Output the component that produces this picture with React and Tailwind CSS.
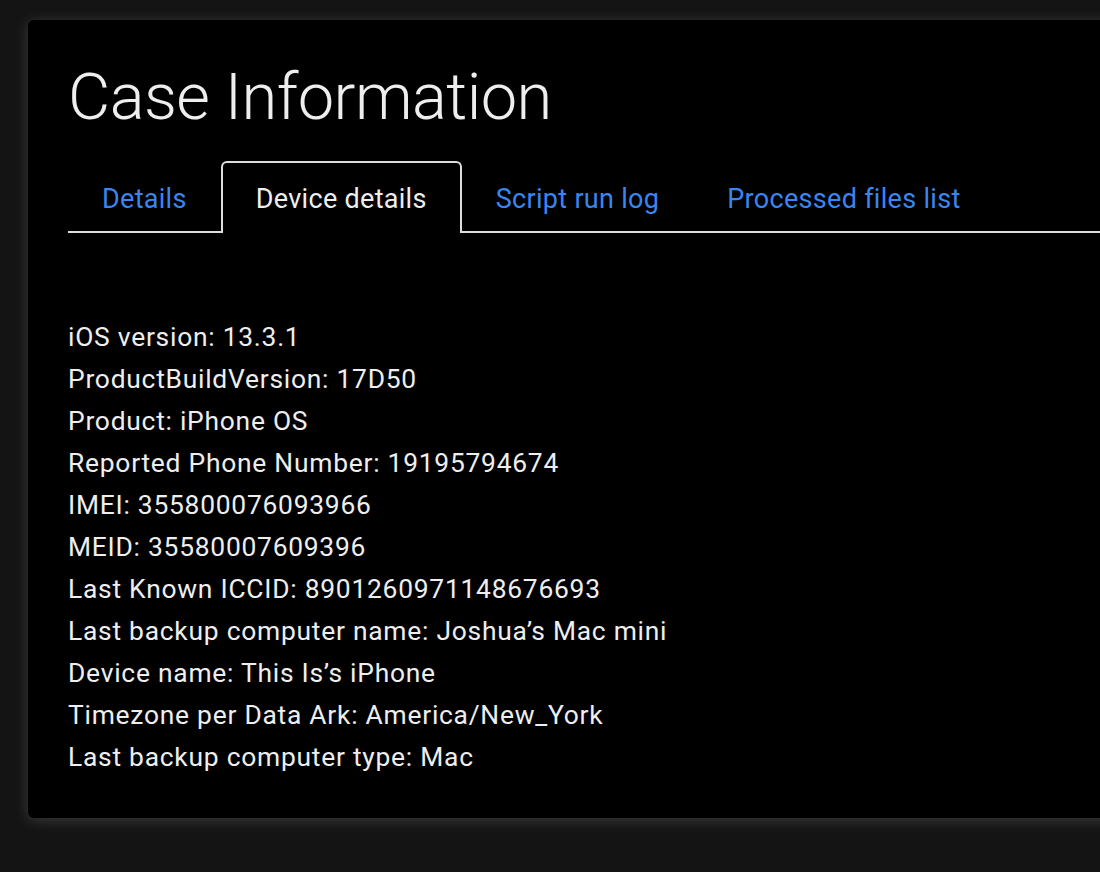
import React from "react";

const rows = [
  "iOS version: 13.3.1",
  "ProductBuildVersion: 17D50",
  "Product: iPhone OS",
  "Reported Phone Number: 19195794674",
  "IMEI: 355800076093966",
  "MEID: 35580007609396",
  "Last Known ICCID: 8901260971148676693",
  "Last backup computer name: Joshua\u2019s Mac mini",
  "Device name: This Is\u2019s iPhone",
  "Timezone per Data Ark: America/New_York",
  "Last backup computer type: Mac",
];

export default function App() {
  return (
    <div
      className="min-h-[872px] w-[1100px] overflow-hidden bg-[#141414] pt-[20px] pl-[28px]"
      style={{ fontFamily: "Roboto, 'Liberation Sans', sans-serif" }}
    >
      <div className="w-[1120px] rounded-md bg-black pt-[44px] pb-[40px] pl-[40px] shadow-[0_2px_14px_rgba(110,110,110,0.45)]">
        <h1 className="text-[65px] font-light leading-[66px] tracking-[-0.55px] text-[#eeeeee]">
          Case Information
        </h1>
        <div className="mt-[31px] flex items-start border-b-2 border-[#dddddd] text-[27px] tracking-[0.3px]">
          <div className="flex h-[70px] items-center px-[34px] pt-[7px] text-[#3a86f0]">
            Details
          </div>
          <div className="-mb-[2px] flex h-[72px] items-center rounded-t-md border-2 border-b-0 border-[#dddddd] bg-black px-[33px] pt-[3px] text-[#eeeeee]">
            Device details
          </div>
          <div className="flex h-[70px] items-center px-[34px] pt-[7px] text-[#3a86f0]">
            Script run log
          </div>
          <div className="flex h-[70px] items-center px-[34px] pt-[7px] text-[#3a86f0]">
            Processed files list
          </div>
        </div>
        <div className="mt-[83px] flex flex-col text-[26.4px] leading-[42px] tracking-[0.75px] text-[#eeeeee]">
          {rows.map((r) => (
            <div key={r}>{r}</div>
          ))}
        </div>
      </div>
    </div>
  );
}
